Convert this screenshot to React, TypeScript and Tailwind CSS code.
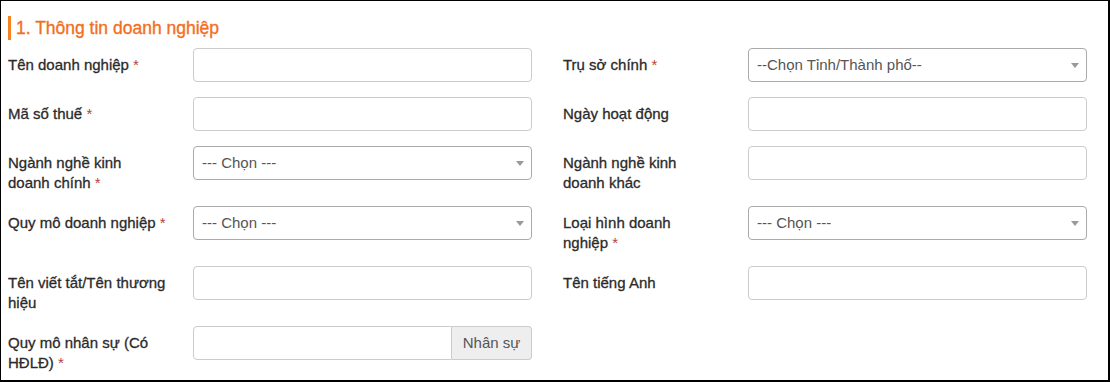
import React from "react";

type Field = {
  label: string[];
  required?: boolean;
  kind: "input" | "select" | "addon";
  placeholder?: string;
  addon?: string;
};

const rows: [Field, Field | null][] = [
  [
    { label: ["Tên doanh nghiệp"], required: true, kind: "input" },
    { label: ["Trụ sở chính"], required: true, kind: "select", placeholder: "--Chọn Tỉnh/Thành phố--" },
  ],
  [
    { label: ["Mã số thuế"], required: true, kind: "input" },
    { label: ["Ngày hoạt động"], kind: "input" },
  ],
  [
    { label: ["Ngành nghề kinh", "doanh chính"], required: true, kind: "select", placeholder: "--- Chọn ---" },
    { label: ["Ngành nghề kinh", "doanh khác"], kind: "input" },
  ],
  [
    { label: ["Quy mô doanh nghiệp"], required: true, kind: "select", placeholder: "--- Chọn ---" },
    { label: ["Loại hình doanh", "nghiệp"], required: true, kind: "select", placeholder: "--- Chọn ---" },
  ],
  [
    { label: ["Tên viết tắt/Tên thương", "hiệu"], kind: "input" },
    { label: ["Tên tiếng Anh"], kind: "input" },
  ],
  [
    { label: ["Quy mô nhân sự (Có", "HĐLĐ)"], required: true, kind: "addon", addon: "Nhân sự" },
    null,
  ],
];

const FormField = ({ field }: { field: Field }) => {
  const last = field.label.length - 1;
  return (
    <div className="flex items-start w-[524px]">
      <label className="w-[185px] pt-[7px] -mb-[2px] text-[15px] leading-[20px] whitespace-nowrap text-[#2b2b2b] [-webkit-text-stroke:0.3px_#2b2b2b]">
        {field.label.map((line, i) => (
          <div key={i}>
            {line}
            {i === last && field.required && (
              <span className="text-[#b8403c] [-webkit-text-stroke:0px]"> *</span>
            )}
          </div>
        ))}
      </label>
      {field.kind === "input" && (
        <input
          type="text"
          className="block w-[339px] h-[34px] px-3 bg-white border border-[#ccc] rounded-[4px] outline-none"
        />
      )}
      {field.kind === "select" && (
        <div className="flex items-center justify-between w-[339px] h-[34px] pl-2 pr-[7px] bg-white border border-[#aaa] rounded-[4px]">
          <span className="text-[15px] text-[#555]">{field.placeholder}</span>
          <span className="w-0 h-0 border-l-[4px] border-r-[4px] border-t-[5px] border-l-transparent border-r-transparent border-t-[#999]"></span>
        </div>
      )}
      {field.kind === "addon" && (
        <div className="flex w-[339px] h-[34px]">
          <input
            type="text"
            className="flex-1 min-w-0 h-full px-3 bg-white border border-[#ccc] rounded-l-[4px] outline-none"
          />
          <span className="flex items-center justify-center w-[80px] h-full text-[15px] text-[#555] bg-[#eee] border border-l-0 border-[#ccc] rounded-r-[4px]">
            {field.addon}
          </span>
        </div>
      )}
    </div>
  );
};

export default function App() {
  return (
    <div className="w-[1110px] h-[382px] bg-white border-l border-t border-r-2 border-b-2 border-black font-['Liberation_Sans',Arial,sans-serif] overflow-hidden">
      <div className="pl-[7px] pt-[15px]">
        <div className="border-l-[3px] border-[#f58220] pl-[5px] text-[17.5px] leading-[24px] text-[#f26f21] [-webkit-text-stroke:0.35px_#f26f21]">
          1. Thông tin doanh nghiệp
        </div>
        <div className="mt-[8px]">
          {rows.map(([left, right], i) => (
            <div key={i} className="flex items-start gap-[31px] mb-[15px]">
              <FormField field={left} />
              {right && <FormField field={right} />}
            </div>
          ))}
        </div>
      </div>
    </div>
  );
}
